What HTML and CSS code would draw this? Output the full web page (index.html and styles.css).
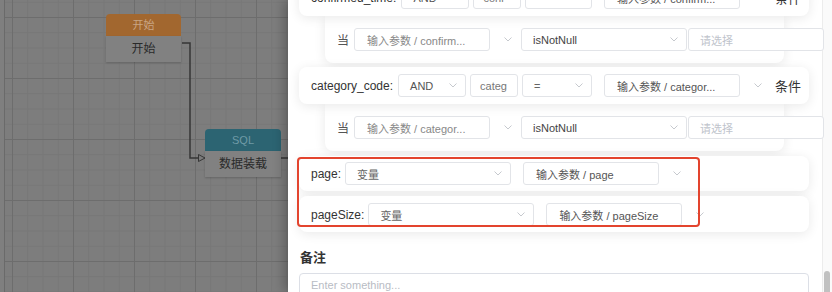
FILE: index.html
```html
<!DOCTYPE html>
<html>
  <head>
    <title>数据装载</title>
    <link rel="stylesheet" href="styles.css">
  </head>
  <body>
    <div class="app">
      <div class="canvas-edge"></div>
      <div class="canvas">
        <svg class="edges" width="283" height="292">
          <polyline points="177,43 185,43 185,158 193,158" fill="none" stroke="#363636" stroke-width="1.5" />
          <polygon points="193.5,154.5 200,158 193.5,161.5" fill="#7b7b7b" stroke="#363636" stroke-width="1" />
          <line x1="276" y1="158" x2="283" y2="158" stroke="#363636" stroke-width="1.5" />
        </svg>
        <div class="node node-start">
          <div class="node-head">开始</div>
          <div class="node-body">开始</div>
        </div>
        <div class="node node-sql">
          <div class="node-head">SQL</div>
          <div class="node-body">数据装载</div>
        </div>
      </div>

      <div class="drawer">
        <div class="drawer-body">
          <div class="cond-card first">
            <span class="field">confirmed_time:</span>
            <div class="control select sel-and">AND<svg class="chev" viewBox="0 0 8 5"><polyline points="0.5,0.5 4,4 7.5,0.5" /></svg></div>
            <div class="control in-code">conf</div>
            <div class="control select sel-op">=<svg class="chev" viewBox="0 0 8 5"><polyline points="0.5,0.5 4,4 7.5,0.5" /></svg></div>
            <div class="cascader">
              <div class="control cascader-box">输入参数 / confirm...</div>
              <svg class="chev" viewBox="0 0 8 5"><polyline points="0.5,0.5 4,4 7.5,0.5" /></svg>
            </div>
            <span class="tag">条件</span>
          </div>
          <div class="sub-card">
            <span class="when">当</span>
            <div class="cascader">
              <div class="control cascader-box muted">输入参数 / confirm...</div>
              <svg class="chev" viewBox="0 0 8 5"><polyline points="0.5,0.5 4,4 7.5,0.5" /></svg>
            </div>
            <div class="control select sel-cmp">isNotNull<svg class="chev" viewBox="0 0 8 5"><polyline points="0.5,0.5 4,4 7.5,0.5" /></svg></div>
            <div class="control in-value">请选择</div>
          </div>

          <div class="cond-card">
            <span class="field">category_code:</span>
            <div class="control select sel-and">AND<svg class="chev" viewBox="0 0 8 5"><polyline points="0.5,0.5 4,4 7.5,0.5" /></svg></div>
            <div class="control in-code">categ</div>
            <div class="control select sel-op">=<svg class="chev" viewBox="0 0 8 5"><polyline points="0.5,0.5 4,4 7.5,0.5" /></svg></div>
            <div class="cascader">
              <div class="control cascader-box">输入参数 / categor...</div>
              <svg class="chev" viewBox="0 0 8 5"><polyline points="0.5,0.5 4,4 7.5,0.5" /></svg>
            </div>
            <span class="tag">条件</span>
          </div>
          <div class="sub-card">
            <span class="when">当</span>
            <div class="cascader">
              <div class="control cascader-box muted">输入参数 / categor...</div>
              <svg class="chev" viewBox="0 0 8 5"><polyline points="0.5,0.5 4,4 7.5,0.5" /></svg>
            </div>
            <div class="control select sel-cmp">isNotNull<svg class="chev" viewBox="0 0 8 5"><polyline points="0.5,0.5 4,4 7.5,0.5" /></svg></div>
            <div class="control in-value">请选择</div>
          </div>

          <div class="param-card page-card">
            <span class="field">page:</span>
            <div class="control select sel-kind">变量<svg class="chev" viewBox="0 0 8 5"><polyline points="0.5,0.5 4,4 7.5,0.5" /></svg></div>
            <div class="cascader">
              <div class="control cascader-box">输入参数 / page</div>
              <svg class="chev" viewBox="0 0 8 5"><polyline points="0.5,0.5 4,4 7.5,0.5" /></svg>
            </div>
          </div>
          <div class="param-card size-card">
            <span class="field">pageSize:</span>
            <div class="control select sel-kind">变量<svg class="chev" viewBox="0 0 8 5"><polyline points="0.5,0.5 4,4 7.5,0.5" /></svg></div>
            <div class="cascader">
              <div class="control cascader-box">输入参数 / pageSize</div>
              <svg class="chev" viewBox="0 0 8 5"><polyline points="0.5,0.5 4,4 7.5,0.5" /></svg>
            </div>
          </div>

          <div class="remark-label">备注</div>
          <div class="remark-input">Enter something...</div>

          <div class="highlight"></div>
        </div>
        <div class="scrollbar"><div class="thumb"></div></div>
      </div>
    </div>
  </body>
</html>
```

FILE: styles.css
```css
body {
  margin: 0;
  font-family: "Liberation Sans", "Noto Sans CJK SC", sans-serif;
  background: #fff;
}
.app {
  display: flex;
  width: 832px;
  height: 292px;
  overflow: hidden;
}

/* dimmed flow canvas */
.canvas-edge {
  flex: 0 0 4px;
  background: #7f7f7f;
  border-right: 1px solid #6a6a6a;
}
.canvas {
  flex: 0 0 283px;
  position: relative;
  overflow: hidden;
  background-color: #7d7d7d;
  background-image:
    linear-gradient(to right, #6d6d6d 1px, transparent 1px),
    linear-gradient(to bottom, #6d6d6d 1px, transparent 1px),
    linear-gradient(to right, #777 1px, transparent 1px),
    linear-gradient(to bottom, #777 1px, transparent 1px);
  background-size: 61px 61px, 61px 61px, 15.25px 15.25px, 15.25px 15.25px;
  background-position: 7px 17px, 7px 17px, 7px 1.75px, 7px 1.75px;
}
.edges {
  position: absolute;
  left: 0;
  top: 0;
}
.node {
  position: absolute;
  width: 75px;
}
.node-start {
  left: 101px;
  top: 14px;
}
.node-sql {
  left: 200px;
  top: 129px;
  width: 76px;
}
.node-head {
  height: 22px;
  line-height: 22px;
  border-radius: 4px 4px 0 0;
  text-align: center;
  font-size: 11px;
}
.node-start .node-head {
  background: #a2672f;
  color: #c9a584;
}
.node-sql .node-head {
  background: #2c6472;
  color: #6f9aa6;
}
.node-body {
  height: 26px;
  line-height: 26px;
  text-align: center;
  font-size: 12px;
  color: #2a2a2a;
  background: #818181;
  box-shadow: 0 1px 2px rgba(0, 0, 0, 0.2);
}

/* drawer */
.drawer {
  flex: 1;
  min-width: 0;
  display: flex;
  background: #fff;
  position: relative;
  z-index: 1;
  box-shadow: -5px 0 10px rgba(0, 0, 0, 0.22);
}
.drawer-body {
  flex: 1;
  min-width: 0;
  position: relative;
  padding: 0 13px 0 11px;
}
.scrollbar {
  flex: 0 0 10px;
  box-sizing: border-box;
  border-left: 1px solid #ececec;
  background: #fafafa;
  padding: 271px 0 0 1px;
}
.thumb {
  width: 6px;
  height: 40px;
  border-radius: 3px;
  background: #c1c1c1;
}

.cond-card,
.param-card {
  display: flex;
  align-items: center;
  background: #fff;
  border-radius: 8px;
  box-shadow: 0 2px 12px rgba(0, 0, 0, 0.09);
  position: relative;
  z-index: 2;
}
.cond-card {
  padding: 7px 8px 7px 12px;
  margin-top: 4px;
}
.cond-card.first {
  margin-top: -21px;
}
.sub-card {
  display: flex;
  align-items: center;
  background: #fff;
  border-radius: 0 0 8px 8px;
  box-shadow: 0 2px 12px rgba(0, 0, 0, 0.09);
  margin: 0 25px 0 26px;
  padding: 12px 0 12px 12px;
  position: relative;
  z-index: 1;
}
.param-card {
  padding: 6px 8px 6px 12px;
}
.page-card {
  margin-top: 5px;
}
.size-card {
  margin-top: 5px;
  padding: 7px 8px 6px 12px;
}

.field {
  font-size: 12px;
  color: #333;
  margin-right: 5px;
  white-space: nowrap;
}
.page-card .field,
.size-card .field {
  margin-right: 4px;
}
.tag {
  font-size: 13px;
  color: #333;
  margin-left: 13px;
  white-space: nowrap;
}
.when {
  font-size: 12px;
  color: #555;
  margin-right: 5px;
}

.control {
  height: 23px;
  box-sizing: border-box;
  border: 1px solid #e2e4e8;
  border-radius: 3px;
  background: #fff;
  display: flex;
  align-items: center;
  padding: 0 11px;
  font-size: 11px;
  color: #555;
  flex-shrink: 0;
  white-space: nowrap;
  overflow: hidden;
}
.select {
  justify-content: space-between;
  padding-right: 8px;
}
.chev {
  width: 8px;
  height: 5px;
  flex-shrink: 0;
}
.chev polyline {
  fill: none;
  stroke: #c6c9ce;
  stroke-width: 1;
}
.sel-and {
  width: 68px;
}
.in-code {
  width: 48px;
  margin-left: 4px;
  padding: 0 9px;
  color: #777;
}
.sel-op {
  flex: 1 1 0;
  min-width: 0;
  margin: 0 12px 0 4px;
  color: #666;
}
.cascader {
  display: flex;
  align-items: center;
  flex-shrink: 0;
}
.cascader .chev {
  margin-left: 14px;
}
.cascader-box {
  width: 136px;
  padding: 0 12px;
  color: #555;
}
.cascader-box.muted {
  color: #888;
}
.sub-card .cascader {
  margin-right: 9px;
}
.sel-cmp {
  width: 166px;
  color: #444;
}
.in-value {
  width: 136px;
  margin-left: 1px;
  color: #c0c4cc;
}
.sel-kind {
  width: 166px;
  margin-right: 12px;
  color: #666;
}

.remark-label {
  font-size: 13px;
  font-weight: bold;
  color: #333;
  line-height: 18px;
  margin-top: 17px;
  padding-left: 1px;
}
.remark-input {
  margin-top: 6px;
  height: 60px;
  box-sizing: border-box;
  border: 1px solid #dcdfe6;
  border-radius: 4px;
  padding: 5px 11px;
  font-size: 11px;
  color: #b8bcc4;
}

/* annotation box */
.highlight {
  position: absolute;
  left: 9px;
  top: 157px;
  width: 403px;
  height: 70px;
  box-sizing: border-box;
  border: 2px solid #e3442e;
  border-radius: 4px;
  z-index: 5;
}
```
